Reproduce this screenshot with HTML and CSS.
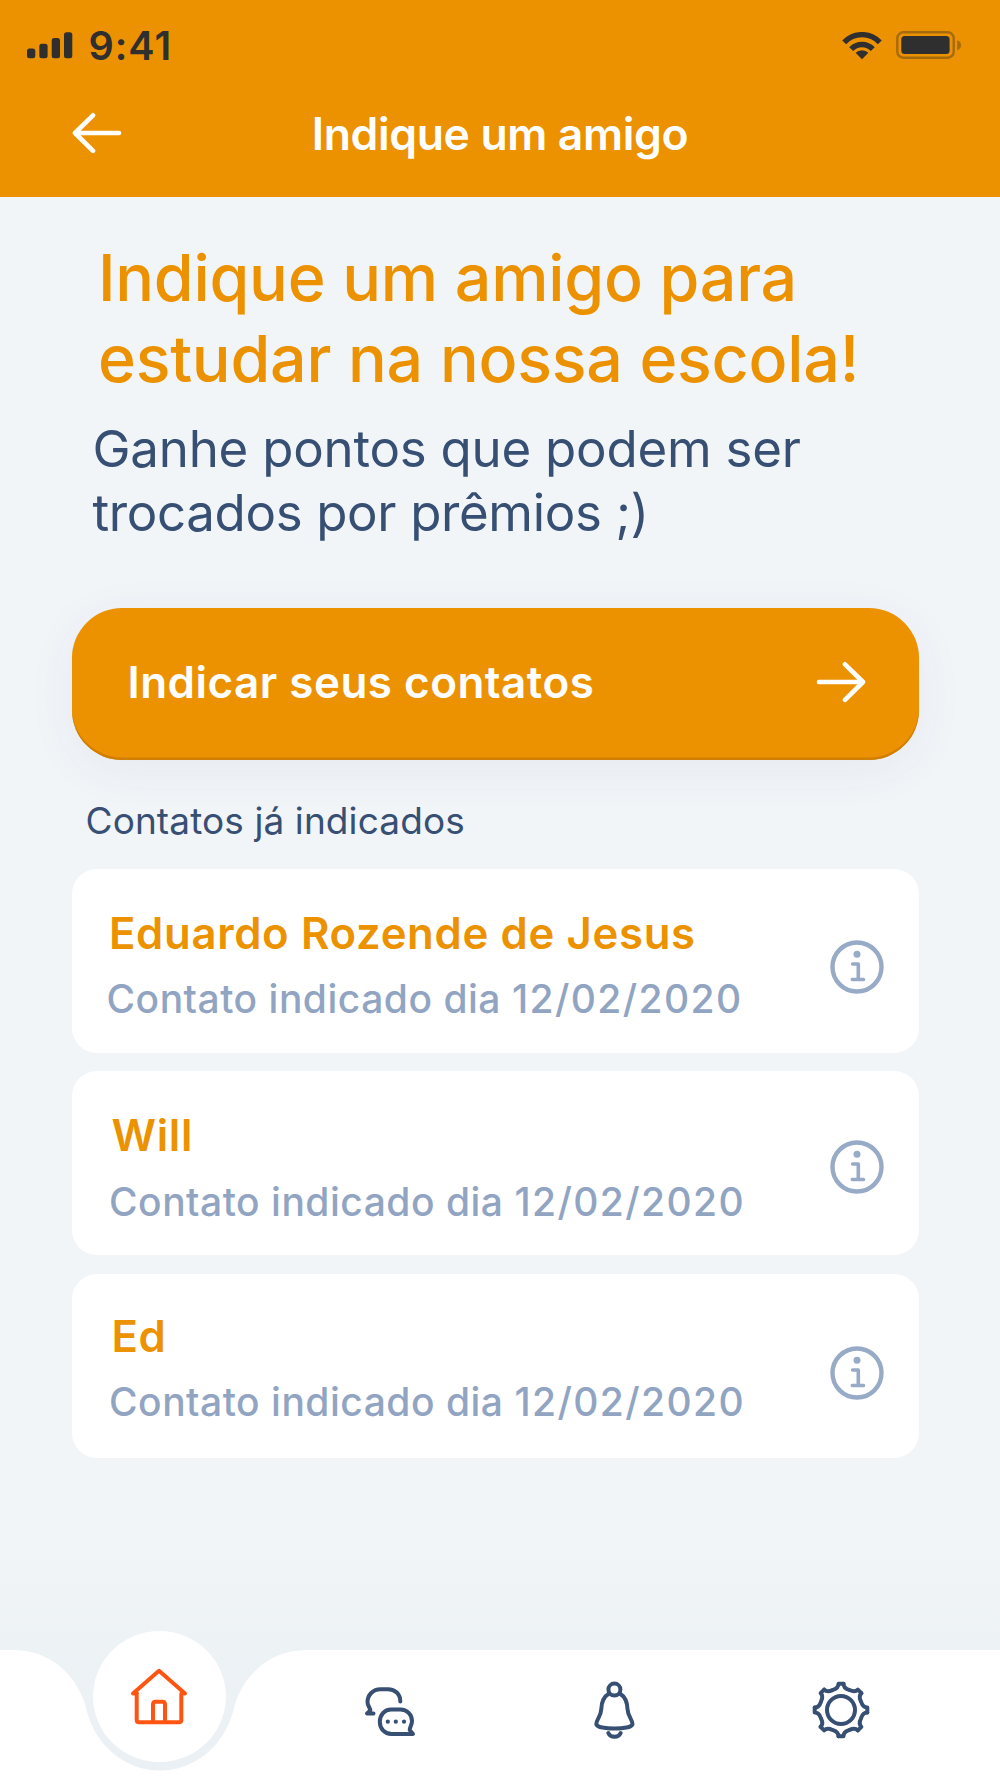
FILE: index.html
```html
<!DOCTYPE html>
<html lang="pt-BR">
<head>
<meta charset="utf-8">
<title>Indique um amigo</title>
<link rel="stylesheet" href="styles.css">
</head>
<body>
<div class="screen">
  <header class="header">
    <div class="status">
      <svg class="signal" width="46" height="27" viewBox="0 0 46 27"><rect x="0" y="16.500" width="8.300" height="9.800" rx="2.500"/><rect x="12.300" y="11.700" width="8.300" height="14.600" rx="2.500"/><rect x="24.700" y="6" width="8.300" height="20.300" rx="2.500"/><rect x="37" y="0.300" width="8.300" height="26" rx="2.500"/></svg>
      <span class="time">9:41</span>
      <svg class="wifi" width="42" height="28" viewBox="841.400 31 42 28"><path class="band" d="M844.600 41.400A24.300 24.300 0 0 1 880.200 41.400M851.600 48.200A14.800 14.800 0 0 1 873.200 48.200"/><path d="M862.400 58.200 856 51.800A9 9 0 0 1 868.800 51.800Z"/></svg>
      <svg class="battery" width="66" height="29" viewBox="896 31 66 29"><rect class="shell" x="897.300" y="32.300" width="56.400" height="25.400" rx="6"/><rect x="901.300" y="36" width="48.300" height="18" rx="3.500"/><path class="nub" d="M957.200 40.300Q961 41.500 961 45.200T957.200 50.200Z"/></svg>
    </div>
    <div class="titlebar">
      <svg class="back" width="50" height="42" viewBox="0 0 50 42"><path d="M21 3.300 3 21 21 38.800M3 21H47"/></svg>
      <h1 class="title">Indique um amigo</h1>
    </div>
  </header>

  <main class="content">
    <h2 class="headline">Indique um amigo para<br>estudar na nossa escola!</h2>
    <p class="lead">Ganhe pontos que podem ser<br><span class="lead-end">trocados por prêmios ;)</span></p>
    <button class="cta" type="button">
      <span>Indicar seus contatos</span>
      <svg width="50" height="42" viewBox="0 0 50 42"><path d="M29 3.300 47 21 29 38.800M47 21H3"/></svg>
    </button>
    <p class="label">Contatos já indicados</p>
    <ul class="contacts">
      <li class="card">
        <div class="who"><p class="name">Eduardo Rozende de Jesus</p><p class="when">Contato indicado dia <time>12/02/2020</time></p></div>
        <svg class="info" width="54" height="54" viewBox="0 0 54 54"><circle class="ring" cx="27" cy="27" r="24.500"/><circle class="dot" cx="27" cy="14.300" r="3.500"/><path d="M22.700 24H28.300V39M22.300 39.500H33.500"/></svg>
      </li>
      <li class="card card-second">
        <div class="who"><p class="name">Will</p><p class="when">Contato indicado dia <time>12/02/2020</time></p></div>
        <svg class="info" width="54" height="54" viewBox="0 0 54 54"><circle class="ring" cx="27" cy="27" r="24.500"/><circle class="dot" cx="27" cy="14.300" r="3.500"/><path d="M22.700 24H28.300V39M22.300 39.500H33.500"/></svg>
      </li>
      <li class="card card-third">
        <div class="who"><p class="name">Ed</p><p class="when">Contato indicado dia <time>12/02/2020</time></p></div>
        <svg class="info" width="54" height="54" viewBox="0 0 54 54"><circle class="ring" cx="27" cy="27" r="24.500"/><circle class="dot" cx="27" cy="14.300" r="3.500"/><path d="M22.700 24H28.300V39M22.300 39.500H33.500"/></svg>
      </li>
    </ul>
  </main>

  <nav class="tabs">
    <svg class="tabs-shape" width="1000" height="128" viewBox="0 1650 1000 128"><path d="M0 1650H14C50 1650 76 1675 84.500 1703L88 1715C98 1748 127 1770.500 160 1770.500S222 1748 232 1715L235.500 1703C244 1675 270 1650 306 1650H1000V1778H0Z"/></svg>
    <a class="tab tab-home">
      <svg width="60" height="60" viewBox="130 1667 60 60"><path d="M137 1693.500H133L159 1670.800 185 1693.500H181.500M136.700 1694V1720Q136.700 1722.200 139 1722.200H179Q181.300 1722.200 181.300 1720V1694M153 1722V1704.500Q153 1701.700 155.500 1701.700H162.500Q165 1701.700 165 1704.500V1722"/></svg>
    </a>
    <a class="tab">
      <svg width="60" height="60" viewBox="360 1680 60 60"><path d="M400.300 1701.500C400.300 1694 395 1689.200 388 1689.200H380.500C373 1689.200 367.500 1695 367.500 1702C367.500 1705.500 370.300 1708 370.300 1710.500L367 1713.500H373.500M391 1709.500H400.500C407 1709.500 412 1714.500 412 1721C412 1725.500 409.300 1727.500 409.700 1730L413 1734H391.500C384.500 1734 379.800 1728.500 379.800 1721.800S384.500 1709.500 391 1709.500Z"/><g class="dots"><circle cx="387.800" cy="1721.700" r="2.100"/><circle cx="395.800" cy="1721.700" r="2.100"/><circle cx="404" cy="1721.700" r="2.100"/></g></svg>
    </a>
    <a class="tab">
      <svg width="60" height="60" viewBox="585 1680 60 60"><circle cx="614.400" cy="1689.600" r="6"/><path d="M609 1693.500C602.500 1697.500 601.500 1703 601.300 1709C601 1716.500 596.300 1719.500 596.300 1724C596.300 1727 606 1728.500 614.400 1728.500S632.500 1727 632.500 1724C632.500 1719.500 627.800 1716.500 627.500 1709C627.300 1703 626.300 1697.500 619.800 1693.500M608.300 1733C610.500 1738 618.500 1738 620.700 1733"/></svg>
    </a>
    <a class="tab">
      <svg width="60" height="60" viewBox="-30 -30 60 60"><defs><path id="cog" d="M2.500 -26.300H-2.500C-2.500 -23 -4 -21.500 -8 -20.200L-8.600 -19.900C-12.400 -18 -14.500 -18 -16.800 -20.400"/></defs><circle r="14"/><use href="#cog"/><use href="#cog" transform="rotate(45)"/><use href="#cog" transform="rotate(90)"/><use href="#cog" transform="rotate(135)"/><use href="#cog" transform="rotate(180)"/><use href="#cog" transform="rotate(225)"/><use href="#cog" transform="rotate(270)"/><use href="#cog" transform="rotate(315)"/></svg>
    </a>
  </nav>
</div>
</body>
</html>
```
FILE: styles.css
```css
* { box-sizing: border-box; }
body, h1, h2, p, ul { margin: 0; padding: 0; }
body { font-family: Inter, "Liberation Sans", sans-serif; color: #374f72; }
svg { display: block; flex: none; fill: none; stroke-linecap: round; stroke-linejoin: round; }

.screen {
  width: 1000px;
  height: 1778px;
  display: flex;
  flex-direction: column;
  overflow: hidden;
  background: linear-gradient(#f1f5f8 0 1530px, #edf2f5 1650px, #eaf0f4 1778px);
}

.header { height: 197px; background: #ec9200; }
.status { display: flex; align-items: center; height: 91px; padding: 0 38px 0 27px; }
.status svg { fill: #2f2f2f; }
.time { margin-left: 15.500px; margin-right: auto; font-size: 39.500px; font-weight: 560; line-height: 48px; letter-spacing: 1px; color: #2f2f2f; }
.wifi { margin-right: 12.600px; }
.wifi .band { fill: none; stroke: #2f2f2f; stroke-width: 5.400; stroke-linecap: butt; }
.battery .shell { fill: none; stroke: #a66b0a; stroke-width: 2.400; }
.battery .nub { fill: #a66b0a; }
.titlebar { display: grid; grid-template-columns: 123px 1fr 123px; align-items: center; height: 85px; }
.back { margin: -1px 0 0 72px; stroke: #fff; stroke-width: 4.600; }
.title { text-align: center; font-size: 44.500px; font-weight: 600; line-height: 54px; letter-spacing: -.36px; color: #fff; }

.content { flex: 1; padding: 41.300px 81px 0 72px; }
.headline { padding-left: 26px; font-size: 64.500px; font-weight: 550; line-height: 80.500px; letter-spacing: -.25px; color: #ec9200; white-space: nowrap; }
.lead { margin-top: 17.500px; padding-left: 20.500px; font-size: 51px; line-height: 64.400px; letter-spacing: -.23px; white-space: nowrap; }
.lead-end { letter-spacing: -.36px; }
.cta {
  display: flex; align-items: center; justify-content: space-between;
  width: 100%; height: 151.500px; margin-top: 62.400px; padding: 0 53px 3px 55.500px;
  border: 0; border-radius: 50px; background: #ec9200;
  box-shadow: inset 0 -2.500px 0 #cf7f03, 0 10px 50px rgba(60, 50, 100, .06);
  font: 600 44px/54px Inter, sans-serif; letter-spacing: .48px; color: #fff;
}
.cta svg { stroke: #fff; stroke-width: 4.600; }
.label { margin-top: 39px; padding-left: 13.500px; font-size: 37px; line-height: 44px; letter-spacing: .1px; }

.contacts { display: flex; flex-direction: column; gap: 18.700px; margin-top: 26.500px; list-style: none; }
.card { display: flex; justify-content: space-between; height: 183.800px; padding: 38px 35px 0 36px; border-radius: 25px; background: #fff; white-space: nowrap; }
.name { padding-left: 1px; font-size: 43.700px; font-weight: 600; line-height: 54px; letter-spacing: .65px; color: #ec9200; }
.when { margin: 13.200px 0 0 -1.500px; font-size: 39px; font-weight: 500; line-height: 50px; letter-spacing: .5px; color: #91a4c2; }
.when time { letter-spacing: 1.400px; }
.info { margin-top: 33px; stroke: #97aac6; stroke-width: 3.600; }
.info .ring { stroke-width: 4.400; }
.info .dot { fill: #97aac6; stroke: none; }
.card-second { padding-left: 38.500px; }
.card-second .info { margin-top: 31px; }
.card-third { padding-left: 38.500px; padding-top: 35.800px; }
.card-third .info { margin-top: 36.200px; }

.tabs { position: relative; display: flex; align-items: center; height: 128px; padding: 0 44px 8px 93px; }
.tabs-shape { position: absolute; inset: 0; fill: #fff; }
.tab { position: relative; display: flex; justify-content: center; width: 225.500px; }
.tab svg { stroke: #374f72; stroke-width: 4; }
.tab .dots { fill: #374f72; stroke: none; }
.tab-home { width: 133px; height: 131px; align-items: center; margin: -27px 51px 0 0; border-radius: 50%; background: #fff; }
.tab-home svg { stroke: #ff5512; }
```
